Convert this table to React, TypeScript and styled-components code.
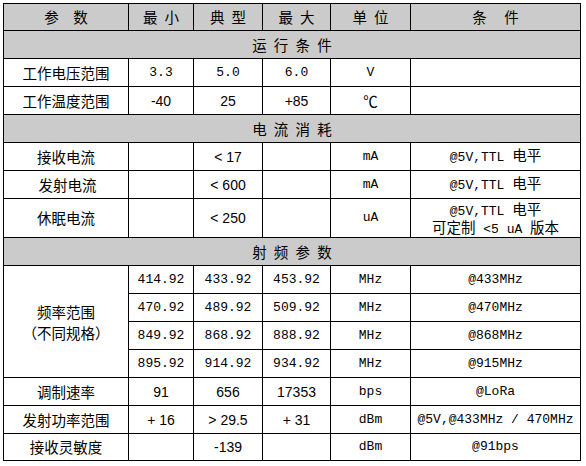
import React from "react";
import styled, { createGlobalStyle } from "styled-components";

const Global = createGlobalStyle`
  html, body { margin: 0; padding: 0; background: #ffffff; }
  body { font-family: "Noto Sans CJK SC", sans-serif; color: #000; }
`;

const Page = styled.div`
  padding: 3px 0 0 3px;
`;

const Table = styled.table`
  border-collapse: collapse;
  table-layout: fixed;
  width: 578px;
`;

const Row = styled.tr<{ $h?: number }>`
  height: ${(p) => p.$h ?? 28}px;
`;

type Kind = "zh" | "mono" | "sans";

const Cell = styled.td<{ $kind?: Kind }>`
  border: 1px solid #000;
  padding: 0;
  text-align: center;
  vertical-align: middle;
  white-space: nowrap;
  font-family: ${(p) =>
    p.$kind === "sans"
      ? '"Liberation Sans", "Noto Sans CJK SC", sans-serif'
      : p.$kind === "mono"
      ? '"Liberation Mono", "Noto Sans CJK SC", monospace'
      : '"Noto Sans CJK SC", sans-serif'};
  font-size: ${(p) => (p.$kind === "mono" ? 13 : p.$kind === "sans" ? 14 : 14.5)}px;
  line-height: 16px;
`;

const HeadCell = styled(Cell)`
  background: #cbcbcb;
  white-space: pre;
`;

const SectionCell = styled.td`
  border: 1px solid #000;
  background: #cbcbcb;
  padding: 0;
  text-align: center;
  font-family: "Noto Sans CJK SC", sans-serif;
  font-size: 14.5px;
  line-height: 16px;
  white-space: pre;
`;

const Zh = styled.span`
  font-family: "Noto Sans CJK SC", sans-serif;
  font-size: 14.5px;
`;

const Lines = styled.div<{ $gap: number }>`
  height: ${(p) => p.$gap * 2}px;
  & > div {
    height: ${(p) => p.$gap}px;
    line-height: ${(p) => p.$gap}px;
    white-space: nowrap;
  }
`;

const cols = [125, 65, 69, 68, 80, 170];

const E = "\u2002";

const Section = ({ title }: { title: string }) => (
  <Row>
    <SectionCell colSpan={6}>{title.split("").join(E)}</SectionCell>
  </Row>
);

const freq = [
  ["414.92", "433.92", "453.92", "@433MHz"],
  ["470.92", "489.92", "509.92", "@470MHz"],
  ["849.92", "868.92", "888.92", "@868MHz"],
  ["895.92", "914.92", "934.92", "@915MHz"],
];

const Cond = ({ text, zh }: { text: string; zh?: string }) => (
  <Cell $kind="mono">
    {text}
    {zh ? <Zh>{zh}</Zh> : null}
  </Cell>
);

export default function App() {
  return (
    <Page>
      <Global />
      <Table>
        <colgroup>
          {cols.map((w, i) => (
            <col key={i} style={{ width: w }} />
          ))}
        </colgroup>
        <tbody>
          <Row $h={27}>
            <HeadCell>{`参${E}${E}数`}</HeadCell>
            <HeadCell>{`最${E}小`}</HeadCell>
            <HeadCell>{`典${E}型`}</HeadCell>
            <HeadCell>{`最${E}大`}</HeadCell>
            <HeadCell>{`单${E}位`}</HeadCell>
            <HeadCell>{`条${E}${E} 件`}</HeadCell>
          </Row>
          <Section title="运行条件" />
          <Row>
            <Cell>工作电压范围</Cell>
            <Cell $kind="mono">3.3</Cell>
            <Cell $kind="mono">5.0</Cell>
            <Cell $kind="mono">6.0</Cell>
            <Cell $kind="mono">V</Cell>
            <Cell />
          </Row>
          <Row>
            <Cell>工作温度范围</Cell>
            <Cell $kind="sans">-40</Cell>
            <Cell $kind="sans">25</Cell>
            <Cell $kind="sans">+85</Cell>
            <Cell>℃</Cell>
            <Cell />
          </Row>
          <Section title="电流消耗" />
          <Row>
            <Cell>接收电流</Cell>
            <Cell />
            <Cell $kind="sans">{"< 17"}</Cell>
            <Cell />
            <Cell $kind="mono">mA</Cell>
            <Cond text="@5V,TTL " zh="电平" />
          </Row>
          <Row>
            <Cell>{"\u00a0发射电流"}</Cell>
            <Cell />
            <Cell $kind="sans">{"< 600"}</Cell>
            <Cell />
            <Cell $kind="mono">mA</Cell>
            <Cond text="@5V,TTL " zh="电平" />
          </Row>
          <Row $h={39}>
            <Cell>休眠电流</Cell>
            <Cell />
            <Cell $kind="sans">{"< 250"}</Cell>
            <Cell />
            <Cell $kind="mono">uA</Cell>
            <Cell $kind="mono">
              <Lines $gap={18}>
                <div>
                  {"@5V,TTL "}
                  <Zh>电平</Zh>
                </div>
                <div>
                  <Zh>可定制</Zh>
                  {" <5 uA "}
                  <Zh>版本</Zh>
                </div>
              </Lines>
            </Cell>
          </Row>
          <Section title="射频参数" />
          {freq.map((f, i) => (
            <Row key={i}>
              {i === 0 ? (
                <Cell rowSpan={4}>
                  <Lines $gap={21}>
                    <div>频率范围</div>
                    <div>（不同规格）</div>
                  </Lines>
                </Cell>
              ) : null}
              <Cell $kind="mono">{f[0]}</Cell>
              <Cell $kind="mono">{f[1]}</Cell>
              <Cell $kind="mono">{f[2]}</Cell>
              <Cell $kind="mono">MHz</Cell>
              <Cell $kind="mono">{f[3]}</Cell>
            </Row>
          ))}
          <Row>
            <Cell>调制速率</Cell>
            <Cell $kind="sans">91</Cell>
            <Cell $kind="sans">656</Cell>
            <Cell $kind="sans">17353</Cell>
            <Cell $kind="mono">bps</Cell>
            <Cell $kind="mono">@LoRa</Cell>
          </Row>
          <Row>
            <Cell>发射功率范围</Cell>
            <Cell $kind="sans">+ 16</Cell>
            <Cell $kind="sans">{"> 29.5"}</Cell>
            <Cell $kind="sans">+ 31</Cell>
            <Cell $kind="mono">dBm</Cell>
            <Cell $kind="mono">@5V,@433MHz / 470MHz</Cell>
          </Row>
          <Row $h={27}>
            <Cell>接收灵敏度</Cell>
            <Cell />
            <Cell $kind="sans">-139</Cell>
            <Cell />
            <Cell $kind="mono">dBm</Cell>
            <Cell $kind="mono">@91bps</Cell>
          </Row>
        </tbody>
      </Table>
    </Page>
  );
}
